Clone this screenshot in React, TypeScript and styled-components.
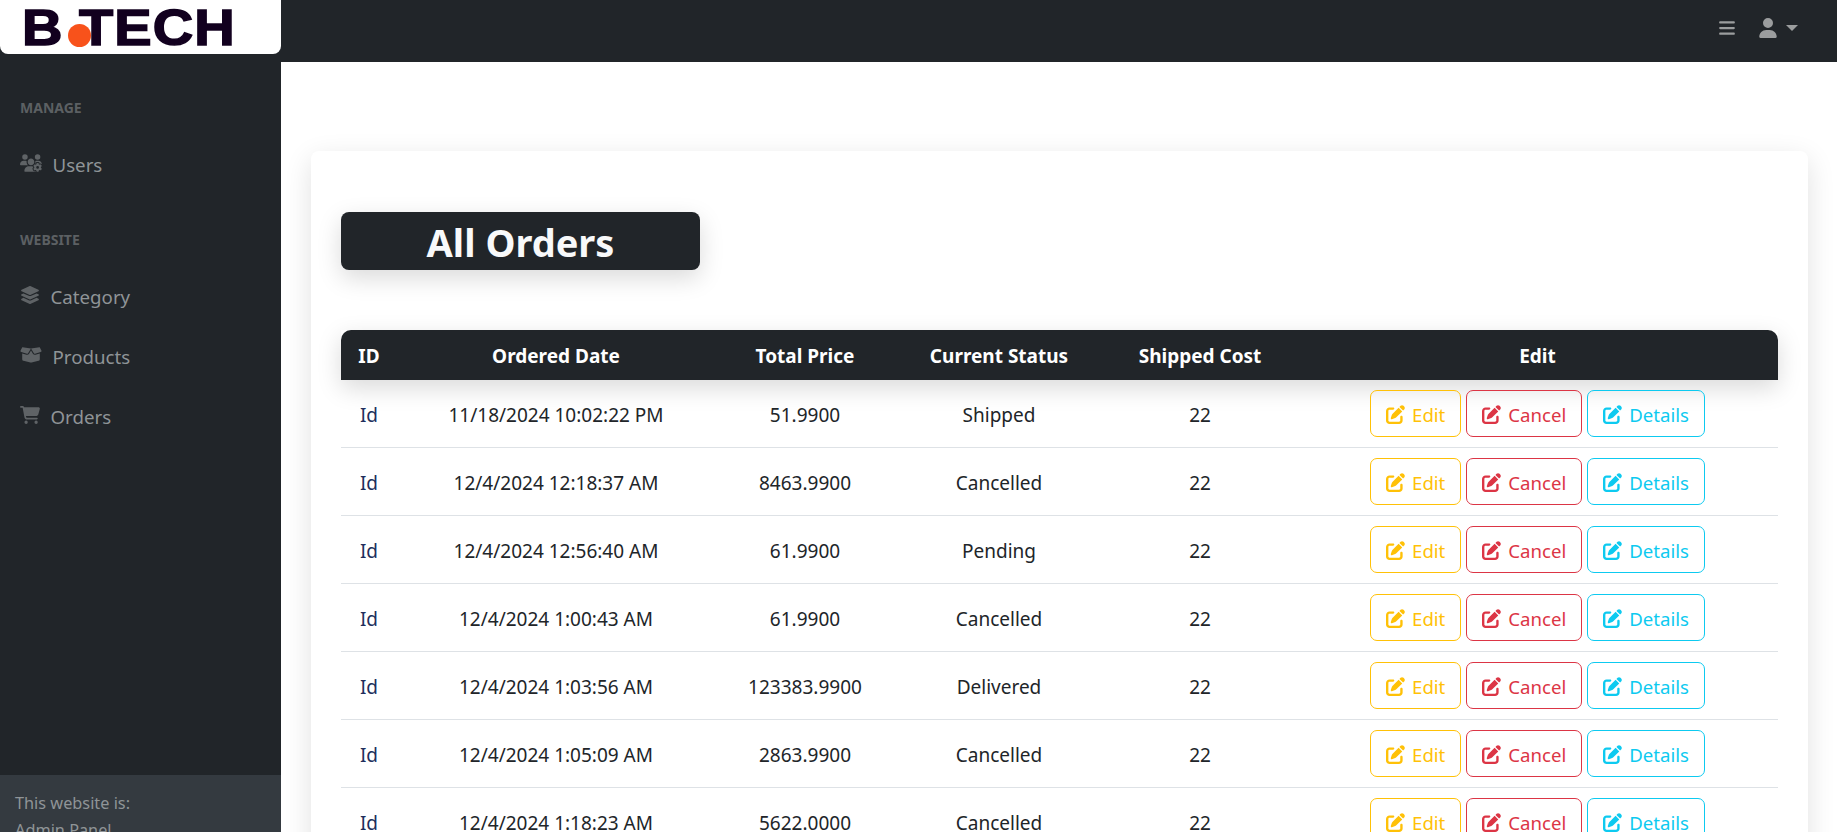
import React from 'react'
import styled, { createGlobalStyle } from 'styled-components'
import { FaBars, FaUser, FaUsersGear, FaLayerGroup, FaBoxOpen, FaCartShopping, FaPenToSquare } from 'react-icons/fa6'

const orders = [
  { date: '11/18/2024 10:02:22 PM', price: '51.9900', status: 'Shipped' },
  { date: '12/4/2024 12:18:37 AM', price: '8463.9900', status: 'Cancelled' },
  { date: '12/4/2024 12:56:40 AM', price: '61.9900', status: 'Pending' },
  { date: '12/4/2024 1:00:43 AM', price: '61.9900', status: 'Cancelled' },
  { date: '12/4/2024 1:03:56 AM', price: '123383.9900', status: 'Delivered' },
  { date: '12/4/2024 1:05:09 AM', price: '2863.9900', status: 'Cancelled' },
  { date: '12/4/2024 1:18:23 AM', price: '5622.0000', status: 'Cancelled' },
]

const App = () => {
  return (
    <>
      <GlobalStyle />
      <Page>
        <TopBar>
          <LogoBox>
            <LogoText>B</LogoText>
            <LogoDot />
            <LogoText>TECH</LogoText>
          </LogoBox>
          <TopActions>
            <FaBars size={18} />
            <UserMenu>
              <FaUser size={20} />
              <Caret />
            </UserMenu>
          </TopActions>
        </TopBar>
        <Body>
          <Sidebar>
            <SideNav>
              <SideHeading>MANAGE</SideHeading>
              <SideLink><FaUsersGear size={22} />Users</SideLink>
              <SideHeading>WEBSITE</SideHeading>
              <SideLink><FaLayerGroup size={20} />Category</SideLink>
              <SideLink><FaBoxOpen size={22} />Products</SideLink>
              <SideLink><FaCartShopping size={20} />Orders</SideLink>
            </SideNav>
            <SideFooter>
              <div>This website is:</div>
              <div>Admin Panel</div>
            </SideFooter>
          </Sidebar>
          <Main>
            <Card>
              <Title>All Orders</Title>
              <OrdersTable>
                <colgroup>
                  <col width={56} />
                  <col width={318} />
                  <col width={180} />
                  <col width={208} />
                  <col width={194} />
                  <col width={481} />
                </colgroup>
                <TableHead>
                  <tr>
                    <HeadCell>ID</HeadCell>
                    <HeadCell>Ordered Date</HeadCell>
                    <HeadCell>Total Price</HeadCell>
                    <HeadCell>Current Status</HeadCell>
                    <HeadCell>Shipped Cost</HeadCell>
                    <HeadCell>Edit</HeadCell>
                  </tr>
                </TableHead>
                <tbody>
                  {orders.map((o) => (
                    <tr key={o.date}>
                      <IdCell>Id</IdCell>
                      <Cell>{o.date}</Cell>
                      <Cell>{o.price}</Cell>
                      <Cell>{o.status}</Cell>
                      <Cell>22</Cell>
                      <Cell>
                        <Actions>
                          <ActionButton $color="#ffc107"><FaPenToSquare size={19} />Edit</ActionButton>
                          <ActionButton $color="#dc3545"><FaPenToSquare size={19} />Cancel</ActionButton>
                          <ActionButton $color="#0dcaf0"><FaPenToSquare size={19} />Details</ActionButton>
                        </Actions>
                      </Cell>
                    </tr>
                  ))}
                </tbody>
              </OrdersTable>
            </Card>
          </Main>
        </Body>
      </Page>
    </>
  )
}

export default App

const GlobalStyle = createGlobalStyle`
  html, body {
    margin: 0;
    height: 100%;
    overflow: hidden;
    background: #fff;
  }
  body {
    font-family: "Noto Sans", "Open Sans", sans-serif;
    color: #212529;
  }
`
const Page = styled.div`
  display: flex;
  flex-direction: column;
  height: 832px;
  overflow: hidden;
`
const TopBar = styled.header`
  display: flex;
  align-items: flex-start;
  justify-content: space-between;
  height: 62px;
  flex: none;
  background: #212529;
`
const LogoBox = styled.div`
  display: flex;
  align-items: center;
  width: 281px;
  height: 54px;
  padding-left: 22px;
  box-sizing: border-box;
  background: #fff;
  border-radius: 0 0 8px 8px;
`
const LogoText = styled.span`
  font-family: "Liberation Sans", sans-serif;
  font-weight: 700;
  font-size: 50px;
  line-height: 54px;
  letter-spacing: 1px;
  margin-top: 2px;
  color: #12001f;
  -webkit-text-stroke: 1.5px #12001f;
  transform: scaleX(1.12);
  transform-origin: left;
  &:last-child {
    width: 140px;
  }
`
const LogoDot = styled.span`
  width: 23px;
  height: 23px;
  margin: 16px -12px 0 9px;
  border-radius: 50%;
  background: #f8521b;
  flex: none;
`
const TopActions = styled.div`
  display: flex;
  align-items: center;
  gap: 22px;
  height: 56px;
  padding-right: 39px;
  color: #9b9d9e;
`
const UserMenu = styled.div`
  display: flex;
  align-items: center;
  gap: 8px;
`
const Caret = styled.span`
  width: 0;
  height: 0;
  border-left: 6px solid transparent;
  border-right: 6px solid transparent;
  border-top: 6px solid #9b9d9e;
`
const Body = styled.div`
  display: flex;
  flex: 1;
  min-height: 0;
`
const Sidebar = styled.aside`
  display: flex;
  flex-direction: column;
  justify-content: space-between;
  width: 281px;
  flex: none;
  background: #212529;
`
const SideNav = styled.nav`
  display: flex;
  flex-direction: column;
  padding: 0 20px;
`
const SideHeading = styled.div`
  font-size: 14px;
  font-weight: 700;
  line-height: 18px;
  color: #5c6063;
  margin-top: 37px;
  margin-bottom: 17px;
`
const SideLink = styled.a`
  display: flex;
  align-items: center;
  gap: 10.5px;
  height: 60px;
  font-size: 18.7px;
  color: #8f9497;
  svg {
    color: #5f6366;
    margin-top: -3px;
  }
`
const SideFooter = styled.div`
  height: 57px;
  padding: 15px 15px 0;
  box-sizing: border-box;
  background: #343a40;
  color: #8f9497;
  font-size: 16.3px;
  line-height: 27px;
`
const Main = styled.main`
  flex: 1;
  min-width: 0;
  padding: 89px 29px 0 30px;
`
const Card = styled.section`
  background: #fff;
  border-radius: 8px;
  box-shadow: 0 8px 28px rgba(0, 0, 0, 0.12);
  padding: 61px 30px 0;
  height: 900px;
  box-sizing: border-box;
`
const Title = styled.h1`
  width: 359px;
  height: 58px;
  margin: 0 0 60px;
  border-radius: 8px;
  background: #212529;
  color: #f8f9fa;
  font-size: 38px;
  font-weight: 700;
  line-height: 60px;
  text-align: center;
  box-shadow: 0 8px 24px rgba(0, 0, 0, 0.15);
`
const OrdersTable = styled.table`
  width: 1437px;
  table-layout: fixed;
  border-collapse: separate;
  border-spacing: 0;
`
const TableHead = styled.thead`
  box-shadow: 0 8px 24px rgba(0, 0, 0, 0.15);
`
const HeadCell = styled.th`
  height: 50px;
  padding: 1px 0 0;
  box-sizing: border-box;
  background: #212529;
  color: #fff;
  font-size: 19px;
  font-weight: 700;
  text-align: center;
  &:first-child {
    border-top-left-radius: 10px;
  }
  &:last-child {
    border-top-right-radius: 10px;
  }
`
const Cell = styled.td`
  height: 68px;
  padding: 2px 0 0;
  box-sizing: border-box;
  text-align: center;
  font-size: 19px;
  color: #212529;
  border-bottom: 1px solid #dee2e6;
`
const IdCell = styled(Cell)`
  color: #212e5c;
`
const Actions = styled.div`
  display: flex;
  justify-content: center;
  gap: 5px;
  margin-top: -2px;
`
const ActionButton = styled.button<{ $color: string }>`
  display: inline-flex;
  align-items: center;
  gap: 7px;
  height: 47px;
  padding: 2px 15px 0;
  background: transparent;
  border: 1px solid ${(p) => p.$color};
  border-radius: 7px;
  color: ${(p) => p.$color};
  font-family: inherit;
  font-size: 18.6px;
`
